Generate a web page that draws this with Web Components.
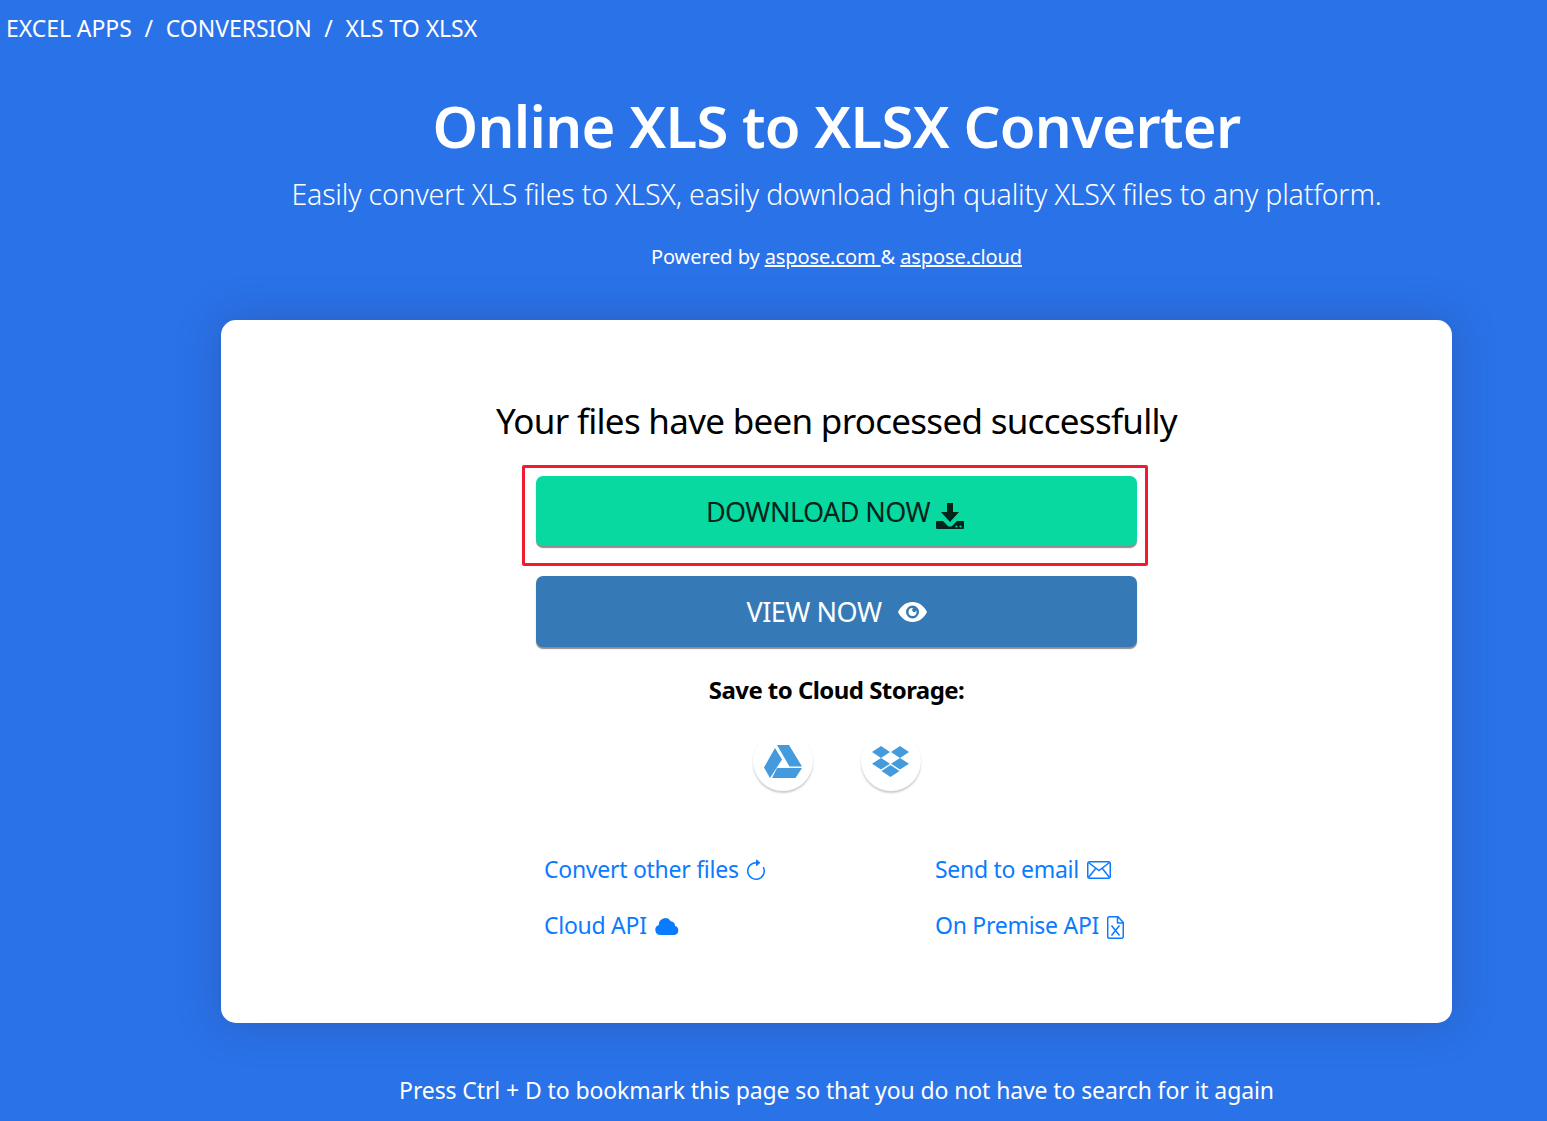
<!DOCTYPE html>
<html>
<head>
<meta charset="utf-8">
<title>XLS to XLSX</title>
<style>
  html, body { margin: 0; height: 100%; overflow: hidden; }
  body { background: #2a72e8; font-family: "Noto Sans", "Open Sans", sans-serif; }
</style>
</head>
<body>
<app-crumbs><span>EXCEL APPS</span><span>CONVERSION</span><span>XLS TO XLSX</span></app-crumbs>
<app-page>
  <app-hero
    heading="Online XLS to XLSX Converter"
    sub="Easily convert XLS files to XLSX, easily download high quality XLSX files to any platform."></app-hero>
  <app-card>
    <h2 slot="title">Your files have been processed successfully</h2>
    <app-button slot="buttons" kind="download" framed>DOWNLOAD NOW</app-button>
    <app-button slot="buttons" kind="view">VIEW NOW</app-button>
    <app-cloud slot="cloud"></app-cloud>
    <app-link slot="links" icon="refresh">Convert other files</app-link>
    <app-link slot="links" icon="mail">Send to email</app-link>
    <app-link slot="links" icon="cloud">Cloud API</app-link>
    <app-link slot="links" icon="file">On Premise API</app-link>
  </app-card>
  <app-note>Press Ctrl + D to bookmark this page so that you do not have to search for it again</app-note>
</app-page>

<script>
class AppCrumbs extends HTMLElement {
  constructor() {
    super();
    const root = this.attachShadow({ mode: 'open' });
    root.innerHTML = `
      <style>
        :host { display: block; padding: 13px 0 0 6px; height: 30px; color: #fff; font-size: 23px; line-height: 30px; letter-spacing: -.05px; }
        .sep { display: inline-block; width: 34px; text-align: center; }
      </style>
      <span id="out"></span><slot hidden></slot>`;
    const parts = [...this.querySelectorAll('span')].map(s => s.textContent);
    root.getElementById('out').innerHTML = parts.join('<span class="sep">/</span>');
  }
}
customElements.define('app-crumbs', AppCrumbs);

class AppPage extends HTMLElement {
  constructor() {
    super();
    this.attachShadow({ mode: 'open' }).innerHTML = `
      <style>:host { display: block; padding: 0 95px 0 221px; }</style>
      <slot></slot>`;
  }
}
customElements.define('app-page', AppPage);

class AppHero extends HTMLElement {
  constructor() {
    super();
    this.attachShadow({ mode: 'open' }).innerHTML = `
      <style>
        :host { display: block; color: #fff; text-align: center; padding-top: 47px; height: 277px; box-sizing: border-box; }
        h1 { margin: 0; font-size: 58px; line-height: 72px; font-weight: 600; letter-spacing: -.7px; white-space: nowrap; }
        p { margin: 12px -100px 0; font-size: 28.5px; line-height: 40px; font-weight: 300; letter-spacing: -.2px; white-space: nowrap; }
        .by { margin-top: 29px; font-size: 20px; line-height: 28px; font-weight: 400; letter-spacing: -.1px; }
        a { color: inherit; text-decoration: underline; }
      </style>
      <h1>${this.getAttribute('heading')}</h1>
      <p>${this.getAttribute('sub')}</p>
      <p class="by">Powered by <a href="#">aspose.com </a>&amp; <a href="#">aspose.cloud</a></p>`;
  }
}
customElements.define('app-hero', AppHero);

class AppCard extends HTMLElement {
  constructor() {
    super();
    this.attachShadow({ mode: 'open' }).innerHTML = `
      <style>
        :host { display: block; background: #fff; border-radius: 15px; height: 703px; box-sizing: border-box; padding-top: 76px;
                box-shadow: 0 0 40px rgba(40, 60, 120, .35); }
        ::slotted(h2) { margin: 0 0 19px; text-align: center; font-size: 35px; line-height: 50px; font-weight: 400; letter-spacing: -.71px; color: #000; }
        .buttons { display: flex; flex-direction: column; align-items: center; gap: 10px; }
        .links { display: grid; grid-template-columns: 391px 1fr; grid-auto-rows: 56px; padding: 50px 0 0 323px; }
      </style>
      <slot name="title"></slot>
      <div class="buttons"><slot name="buttons"></slot></div>
      <slot name="cloud"></slot>
      <div class="links"><slot name="links"></slot></div>`;
  }
}
customElements.define('app-card', AppCard);

const ICONS = {
  download: `<svg width="28" height="26" viewBox="0 0 28 26"><path fill="currentColor" d="M11 0h6v9h6l-9 10-9-10h6zM1 18h6l5.500 5.500h3L21 18h6a1 1 0 0 1 1 1v6a1 1 0 0 1-1 1H1a1 1 0 0 1-1-1v-6a1 1 0 0 1 1-1z"/><circle cx="20.500" cy="23.500" r="1.100" fill="#07d9a0"/><circle cx="24.500" cy="23.500" r="1.100" fill="#07d9a0"/></svg>`,
  eye: `<svg width="29" height="20" viewBox="0 0 29 20"><path fill="#fff" fill-rule="evenodd" d="M14.500 0C8 0 3 4 0 10c3 6 8 10 14.500 10S26 16 29 10C26 4 21 0 14.500 0zm0 3.500a6.500 6.500 0 1 1 0 13 6.500 6.500 0 0 1 0-13zm0 2.500a4 4 0 1 0 4 4c0-.6-.1-1.100-.4-1.600a2 2 0 1 1-2.600-2.300A4 4 0 0 0 14.500 6z"/></svg>`,
  refresh: `<svg width="24" height="24" viewBox="0 0 16 16" style="margin:3px 0 0 -3px"><path fill="currentColor" fill-rule="evenodd" d="M8 3a5 5 0 1 0 4.546 2.914.5.5 0 0 1 .908-.417A6 6 0 1 1 8 2v1z"/><path fill="currentColor" d="M8 4.466V.534a.25.25 0 0 1 .41-.192l2.360 1.966c.12.1.12.284 0 .384L8.410 4.658A.25.25 0 0 1 8 4.466z"/></svg>`,
  mail: `<svg width="24" height="18" viewBox="0 0 24 18" style="margin-top:2px"><rect x=".75" y=".75" width="22.500" height="16.500" rx="2" fill="none" stroke="currentColor" stroke-width="1.500"/><path fill="none" stroke="currentColor" stroke-width="1.500" d="M1.500 1.500l10.500 8 10.500-8M1.500 16.500l7.500-9.500M22.500 16.500l-7.500-9.500"/></svg>`,
  cloud: `<svg width="24" height="17" viewBox="0 0 24 17" style="margin-top:2px"><path fill="currentColor" d="M5.500 17A5.200 5.200 0 0 1 3.800 6.900 6.500 6.500 0 0 1 15.800 3.200 4.500 4.500 0 0 1 20 8a4.600 4.600 0 0 1-.8 9z"/></svg>`,
  file: `<svg width="17" height="23" viewBox="0 0 17 23" style="margin-top:4px"><path fill="none" stroke="currentColor" stroke-width="1.500" stroke-linejoin="round" d="M2.500.75h8.500l5.250 5.750V20.500a1.800 1.800 0 0 1-1.800 1.800H2.500a1.800 1.800 0 0 1-1.800-1.800V2.500a1.800 1.800 0 0 1 1.800-1.800zM10.500 1v6h5.500"/><path fill="none" stroke="currentColor" stroke-width="1.500" d="M4.500 9.500l8 10M12.500 9.500l-8 10"/></svg>`
};

class AppButton extends HTMLElement {
  constructor() {
    super();
    const view = this.getAttribute('kind') === 'view';
    const framed = this.hasAttribute('framed');
    const box = framed
      ? 'width: 626px; margin-left: -3px; padding: 8px 8px 17px 11px; border: 3px solid #ee1c2e; border-radius: 2px;'
      : 'width: 601px;';
    this.attachShadow({ mode: 'open' }).innerHTML = `
      <style>
        :host { display: block; box-sizing: border-box; ${box} }
        a { display: flex; align-items: center; justify-content: center; gap: ${view ? '16px' : '6px'}; height: ${view ? '71px' : '70px'};
            border-radius: 7px; font-size: 27px; letter-spacing: ${view ? '-.47px' : '-.55px'}; text-decoration: none;
            background: ${view ? '#357ab7' : '#07d9a0'}; color: ${view ? '#fff' : '#04231b'};
            box-shadow: 0 2px 1px rgba(0,0,0,.45); }
        svg { display: block; }
        .ic { position: relative; top: ${view ? '0' : '5px'}; margin-right: ${view ? '0' : '3px'}; }
      </style>
      <a href="#"><slot></slot><span class="ic">${view ? ICONS.eye : ICONS.download}</span></a>`;
  }
}
customElements.define('app-button', AppButton);

class AppCloud extends HTMLElement {
  constructor() {
    super();
    this.attachShadow({ mode: 'open' }).innerHTML = `
      <style>
        :host { display: block; text-align: center; padding-top: 28px; color: #000; }
        b { display: block; font-size: 24px; line-height: 30px; font-weight: 700; letter-spacing: -.55px; }
        .row { display: flex; justify-content: center; gap: 48px; margin-top: 26px; }
        .disc { width: 60px; height: 60px; border-radius: 50%; background: #fff; display: flex; align-items: center; justify-content: center;
                box-shadow: 0 2px 2px rgba(0,0,0,.2); }
      </style>
      <b>Save to Cloud Storage:</b>
      <div class="row">
        <div class="disc">
          <svg width="38" height="33" viewBox="0 0 38 33"><path fill="#439bdd" d="M13 0h12l13 21.500H25.500zM11 3l7 11.500L6 33 0 22.500zM13 23h25l-6.500 10H8z"/></svg>
        </div>
        <div class="disc">
          <svg width="37" height="31" viewBox="0 0 37 31"><path fill="#439bdd" d="M9 0l9 6-9 6-9-6zM28 0l9 6-9 6-9-6zM9 12l9 5.800-9 5.800-9-5.800zM28 12l9 5.800-9 5.800-9-5.800zM18.500 19l9 6-9 6-9-6z"/></svg>
        </div>
      </div>`;
  }
}
customElements.define('app-cloud', AppCloud);

class AppLink extends HTMLElement {
  constructor() {
    super();
    this.attachShadow({ mode: 'open' }).innerHTML = `
      <style>
        :host { display: block; color: #0a7bff; font-size: 23px; line-height: 56px; letter-spacing: -.27px; }
        a { display: inline-flex; align-items: center; gap: 8px; color: inherit; text-decoration: none; }
        svg { display: block; }
      </style>
      <a href="#"><slot></slot>${ICONS[this.getAttribute('icon')]}</a>`;
  }
}
customElements.define('app-link', AppLink);

class AppNote extends HTMLElement {
  constructor() {
    super();
    this.attachShadow({ mode: 'open' }).innerHTML = `
      <style>
        :host { display: block; color: #fff; text-align: center; padding-top: 51px; font-size: 23px; line-height: 32px; letter-spacing: -.11px; white-space: nowrap; }
      </style>
      <slot></slot>`;
  }
}
customElements.define('app-note', AppNote);
</script>
</body>
</html>
